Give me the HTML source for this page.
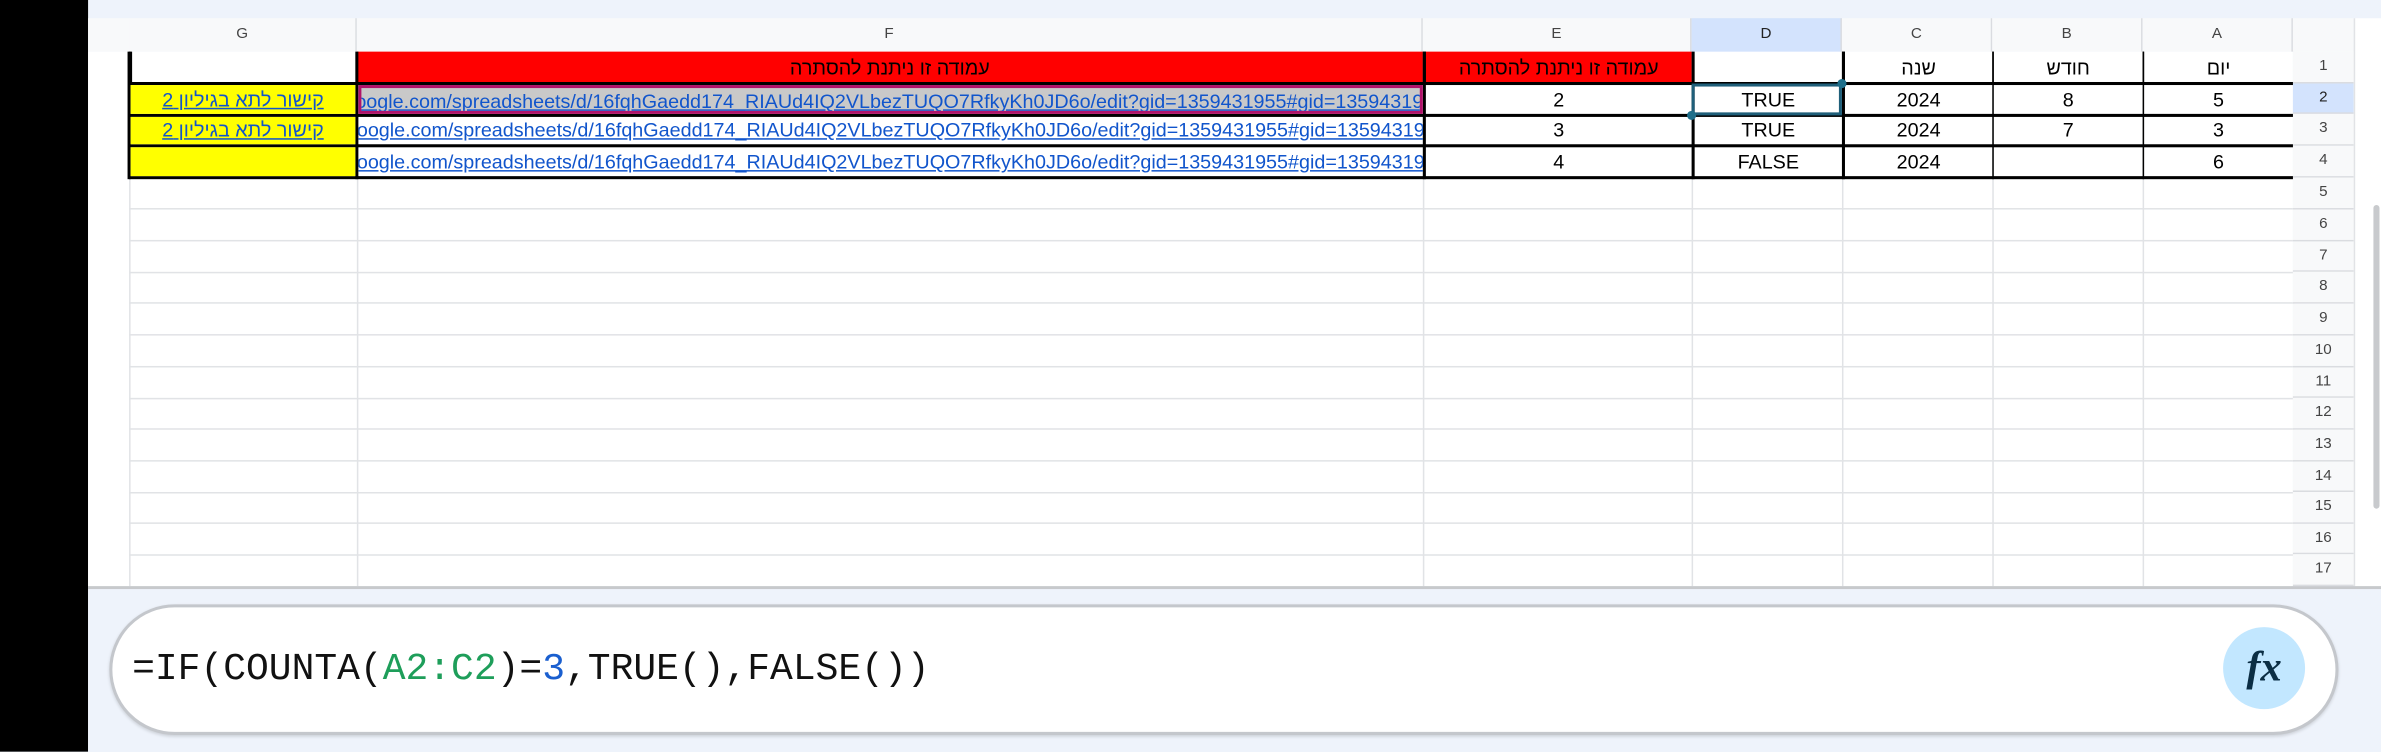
<!DOCTYPE html>
<html><head><meta charset="utf-8">
<style>
html,body{margin:0;padding:0;width:2381px;height:751px;overflow:hidden;background:#eef3fb;}
#w{position:absolute;left:0;top:0;width:1568px;height:495px;transform:scale(1.5185);transform-origin:0 0;font-family:"Liberation Sans","Noto Sans CJK JP",sans-serif;font-size:13px;color:#000;}
.a{position:absolute;box-sizing:border-box;}
.hd{background:#f8f9fa;color:#444;font-size:10px;text-align:center;line-height:22px;border-right:1px solid #dadce0;}
.c{text-align:center;line-height:20px;overflow:hidden;white-space:nowrap;}
.vl{position:absolute;top:34px;width:1px;height:352px;background:#e1e3e6;}
.hl{position:absolute;left:85px;width:1425px;height:1px;background:#e1e3e6;}
.rn{position:absolute;left:1510px;width:40px;text-align:center;font-size:10px;color:#444;line-height:20px;background:#f8f9fa;border-bottom:1px solid #dadce0;box-sizing:border-box;}
.lk{color:#1155cc;text-decoration:underline;}
</style></head><body>
<div id="w">
<div class="a" style="left:0;top:0;width:58px;height:495px;background:#000;"></div>
<div class="a" style="left:58px;top:34px;width:1492px;height:352px;background:#fff;"></div>
<div class="a" style="left:58px;top:12px;width:27px;height:22px;background:#f8f9fa;"></div>
<!-- headers -->
<div class="a hd" style="left:85px;top:12px;width:150px;height:22px;">G</div>
<div class="a hd" style="left:235px;top:12px;width:702px;height:22px;">F</div>
<div class="a hd" style="left:937px;top:12px;width:177px;height:22px;">E</div>
<div class="a hd" style="left:1114px;top:12px;width:99px;height:22px;background:#d3e3fd;color:#222;">D</div>
<div class="a hd" style="left:1213px;top:12px;width:99px;height:22px;">C</div>
<div class="a hd" style="left:1312px;top:12px;width:99px;height:22px;">B</div>
<div class="a hd" style="left:1411px;top:12px;width:99px;height:22px;">A</div>
<div class="a" style="left:1510px;top:12px;width:40px;height:22px;background:#f8f9fa;"></div>
<!-- grid lines -->
<div class="vl" style="left:85px"></div><div class="vl" style="left:235px"></div><div class="vl" style="left:937px"></div><div class="vl" style="left:1114px"></div><div class="vl" style="left:1213px"></div><div class="vl" style="left:1312px"></div><div class="vl" style="left:1411px"></div><div class="vl" style="left:1510px"></div>
<div class="hl" style="top:137px"></div><div class="hl" style="top:158px"></div><div class="hl" style="top:179px"></div><div class="hl" style="top:199px"></div><div class="hl" style="top:220px"></div><div class="hl" style="top:241px"></div><div class="hl" style="top:262px"></div><div class="hl" style="top:282px"></div><div class="hl" style="top:303px"></div><div class="hl" style="top:324px"></div><div class="hl" style="top:344px"></div><div class="hl" style="top:365px"></div>
<!-- row numbers -->
<div class="rn" style="top:34px;height:21px">1</div>
<div class="rn" style="top:55px;height:20px;background:#d3e3fd;color:#222">2</div>
<div class="rn" style="top:75px;height:21px">3</div>
<div class="rn" style="top:96px;height:21px">4</div>
<div class="rn" style="top:117px;height:21px">5</div>
<div class="rn" style="top:138px;height:21px">6</div>
<div class="rn" style="top:159px;height:20px">7</div>
<div class="rn" style="top:179px;height:21px">8</div>
<div class="rn" style="top:200px;height:21px">9</div>
<div class="rn" style="top:221px;height:21px">10</div>
<div class="rn" style="top:242px;height:20px">11</div>
<div class="rn" style="top:262px;height:21px">12</div>
<div class="rn" style="top:283px;height:21px">13</div>
<div class="rn" style="top:304px;height:20px">14</div>
<div class="rn" style="top:324px;height:21px">15</div>
<div class="rn" style="top:345px;height:20px">16</div>
<div class="rn" style="top:365px;height:21px">17</div>
<div class="a" style="left:1550px;top:12px;width:18px;height:374px;background:#fff;border-left:1px solid #e1e3e6;"></div>
<div class="a" style="left:1563px;top:135px;width:4px;height:200px;background:#c8cacd;border-radius:2px;"></div>
<!-- row 1 -->
<div class="a c" style="left:85px;top:34px;width:150px;height:21px;border-left:2px solid #000;"></div>
<div class="a c" style="left:235px;top:34px;width:702px;height:21px;background:#f00;line-height:21px;">עמודה זו ניתנת להסתרה</div>
<div class="a c" style="left:937px;top:34px;width:177px;height:21px;background:#f00;line-height:21px;border-left:2px solid #000;">עמודה זו ניתנת להסתרה</div>
<div class="a c" style="left:1114px;top:34px;width:99px;height:21px;line-height:21px;"></div>
<div class="a c" style="left:1213px;top:34px;width:99px;height:21px;line-height:21px;border-left:2px solid #000;">שנה</div>
<div class="a c" style="left:1312px;top:34px;width:99px;height:21px;line-height:21px;border-left:1px solid #000;">חודש</div>
<div class="a c" style="left:1411px;top:34px;width:99px;height:21px;line-height:21px;border-left:1px solid #000;">יום</div>
<!-- data rows borders -->
<div class="a" style="left:85px;top:54px;width:1425px;height:2px;background:#000"></div>
<div class="a" style="left:85px;top:75px;width:1425px;height:2px;background:#000"></div>
<div class="a" style="left:85px;top:95px;width:1425px;height:2px;background:#000"></div>
<div class="a" style="left:85px;top:116px;width:1425px;height:2px;background:#000"></div>
<div class="a" style="left:84px;top:34px;width:2px;height:84px;background:#000"></div>
<div class="a" style="left:234px;top:34px;width:2px;height:84px;background:#000"></div>
<div class="a" style="left:937px;top:34px;width:2px;height:84px;background:#000"></div>
<div class="a" style="left:1114px;top:34px;width:2px;height:84px;background:#000"></div>
<div class="a" style="left:1213px;top:34px;width:2px;height:84px;background:#000"></div>
<div class="a" style="left:1312px;top:34px;width:1px;height:84px;background:#000"></div>
<div class="a" style="left:1411px;top:34px;width:1px;height:84px;background:#000"></div>
<!-- G -->
<div class="a c" style="left:86px;top:56px;width:148px;height:19px;background:#ff0;"><span class="lk">קישור לתא בגיליון 2</span></div>
<div class="a c" style="left:86px;top:77px;width:148px;height:18px;background:#ff0;line-height:18px;"><span class="lk">קישור לתא בגיליון 2</span></div>
<div class="a c" style="left:86px;top:97px;width:148px;height:19px;background:#ff0;"></div>
<!-- F -->
<div class="a" style="left:236px;top:56px;width:701px;height:19px;overflow:hidden;white-space:nowrap;line-height:18px;border:2px solid #b0126a;background:#c9c9c9;"><span class="lk" style="margin-left:-4px;display:inline-block">oogle.com/spreadsheets/d/16fqhGaedd174_RIAUd4IQ2VLbezTUQO7RfkyKh0JD6o/edit?gid=1359431955#gid=1359431955</span></div>
<div class="a" style="left:236px;top:77px;width:701px;height:18px;overflow:hidden;white-space:nowrap;line-height:18px;"><span class="lk" style="margin-left:-1px;display:inline-block">oogle.com/spreadsheets/d/16fqhGaedd174_RIAUd4IQ2VLbezTUQO7RfkyKh0JD6o/edit?gid=1359431955#gid=1359431955</span></div>
<div class="a" style="left:236px;top:97px;width:701px;height:19px;overflow:hidden;white-space:nowrap;line-height:19px;"><span class="lk" style="margin-left:-1px;display:inline-block">oogle.com/spreadsheets/d/16fqhGaedd174_RIAUd4IQ2VLbezTUQO7RfkyKh0JD6o/edit?gid=1359431955#gid=1359431955</span></div>
<!-- E..A values -->
<div class="a c" style="left:939px;top:56px;width:175px;height:19px;">2</div>
<div class="a c" style="left:939px;top:77px;width:175px;height:18px;line-height:18px;">3</div>
<div class="a c" style="left:939px;top:97px;width:175px;height:19px;">4</div>
<div class="a c" style="left:1116px;top:56px;width:97px;height:19px;">TRUE</div>
<div class="a c" style="left:1116px;top:77px;width:97px;height:18px;line-height:18px;">TRUE</div>
<div class="a c" style="left:1116px;top:97px;width:97px;height:19px;">FALSE</div>
<div class="a c" style="left:1215px;top:56px;width:97px;height:19px;">2024</div>
<div class="a c" style="left:1215px;top:77px;width:97px;height:18px;line-height:18px;">2024</div>
<div class="a c" style="left:1215px;top:97px;width:97px;height:19px;">2024</div>
<div class="a c" style="left:1313px;top:56px;width:98px;height:19px;">8</div>
<div class="a c" style="left:1313px;top:77px;width:98px;height:18px;line-height:18px;">7</div>
<div class="a c" style="left:1412px;top:56px;width:98px;height:19px;">5</div>
<div class="a c" style="left:1412px;top:77px;width:98px;height:18px;line-height:18px;">3</div>
<div class="a c" style="left:1412px;top:97px;width:98px;height:19px;">6</div>
<!-- D2 selection -->
<div class="a" style="left:1114px;top:55px;width:99px;height:21px;border:2px solid #1f5f7a;"></div>
<div class="a" style="left:1210px;top:52px;width:6px;height:6px;border-radius:50%;background:#1f6f8b;"></div>
<div class="a" style="left:1111px;top:73px;width:6px;height:6px;border-radius:50%;background:#1f6f8b;"></div>
<!-- bottom -->
<div class="a" style="left:58px;top:386px;width:1510px;height:2px;background:#c7c9cc;"></div>
<div class="a" style="left:58px;top:388px;width:1510px;height:107px;background:#eef3fb;"></div>
<div class="a" style="left:72px;top:398px;width:1468px;height:86px;border-radius:43px;background:#fff;border:2px solid #c4c7cc;box-shadow:0 1px 2px rgba(0,0,0,.15);"></div>
<div class="a" style="left:87px;top:423px;font-family:'Liberation Mono',monospace;font-size:25px;line-height:36px;color:#111;white-space:nowrap;">=IF(COUNTA(<span style="color:#1e9e5a">A2:C2</span>)=<span style="color:#1a5fcf">3</span>,TRUE(),FALSE())</div>
<div class="a" style="left:1464px;top:413px;width:54px;height:54px;border-radius:50%;background:#c2e7ff;text-align:center;line-height:54px;font-family:'Liberation Serif',serif;font-style:italic;font-weight:bold;font-size:28px;color:#0b2e44;">fx</div>
</div>
</body></html>
